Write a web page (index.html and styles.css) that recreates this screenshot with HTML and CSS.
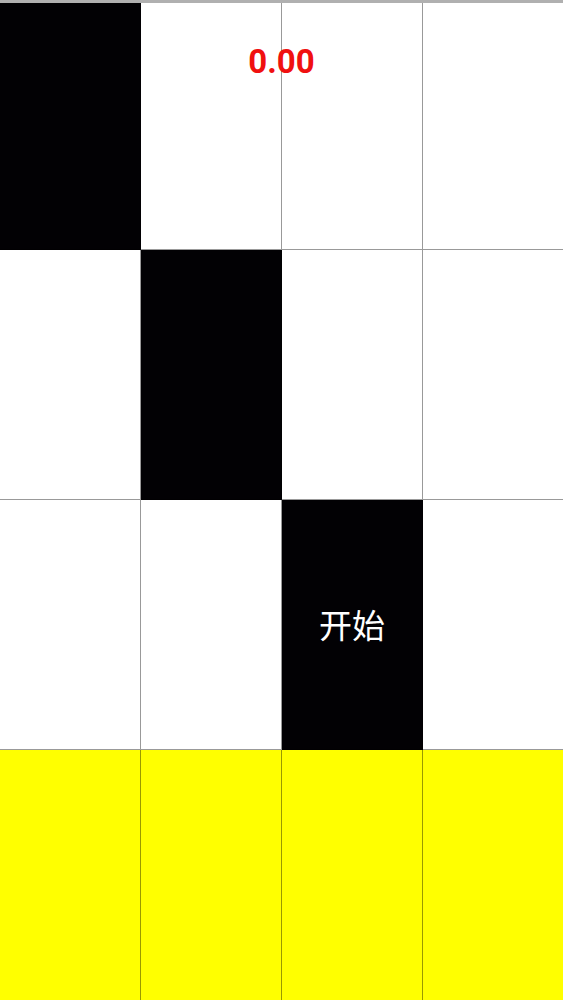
FILE: index.html
```html
<!DOCTYPE html>
<html lang="zh">
<head>
<meta charset="utf-8">
<title>别踩白块</title>
<link rel="stylesheet" href="styles.css">
</head>
<body>
<div class="board">
  <div class="cell black"></div>
  <div class="cell"></div>
  <div class="cell"></div>
  <div class="cell last"></div>

  <div class="cell"></div>
  <div class="cell black"></div>
  <div class="cell"></div>
  <div class="cell last"></div>

  <div class="cell"></div>
  <div class="cell"></div>
  <div class="cell black start">开始</div>
  <div class="cell last"></div>

  <div class="cell yellow"></div>
  <div class="cell yellow"></div>
  <div class="cell yellow"></div>
  <div class="cell yellow last"></div>

  <div class="score">0.00</div>
</div>
</body>
</html>
```
FILE: styles.css
```css
html, body {
  margin: 0;
  padding: 0;
  background: #ffffff;
}

.board {
  position: relative;
  width: 563px;
  height: 1000px;
  box-sizing: border-box;
  border-top: 3px solid #b0b0b0;
  display: grid;
  grid-template-columns: 141px 141px 141px 140px;
  grid-template-rows: 247px 250px 250px 250px;
  overflow: hidden;
}

.cell {
  box-sizing: border-box;
  border-right: 1px solid rgba(0, 0, 0, 0.4);
  border-bottom: 1px solid rgba(0, 0, 0, 0.4);
  background: #ffffff;
}

.cell.last {
  border-right: none;
}

.cell.black {
  background: #020104;
}

.cell.yellow {
  background: #ffff00;
  border-bottom: none;
}

.start {
  display: flex;
  align-items: center;
  justify-content: center;
  color: #ffffff;
  font-family: "Noto Sans CJK SC", "Noto Sans", sans-serif;
  font-size: 33px;
  padding-bottom: 2px;
}

.score {
  position: absolute;
  left: 0;
  right: 0;
  top: 37px;
  text-align: center;
  font-family: Roboto, "Liberation Sans", sans-serif;
  font-weight: 700;
  font-size: 33px;
  line-height: 44px;
  color: #f01010;
}
```
